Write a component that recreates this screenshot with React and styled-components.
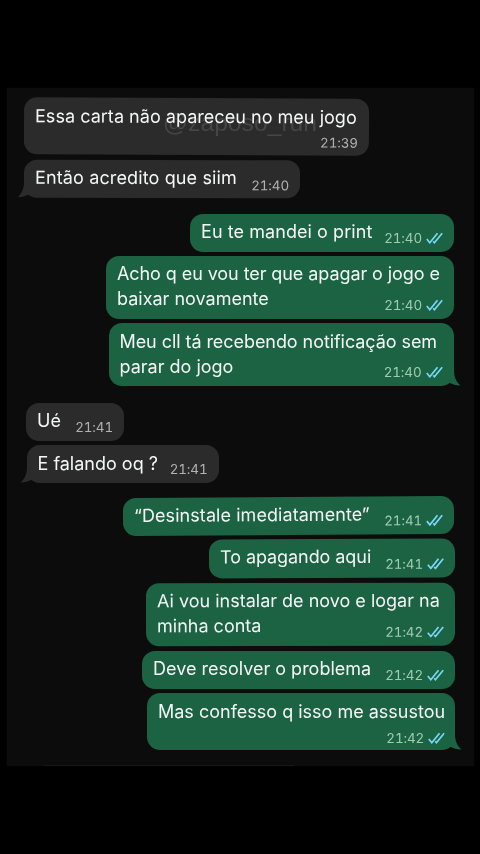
import React from "react";
import styled, { createGlobalStyle, css } from "styled-components";

const Global = createGlobalStyle`
  * { box-sizing: border-box; }
  html, body { margin: 0; background: #000; }
`;

const Screen = styled.main`
  width: 480px;
  height: 854px;
  padding: 88px 6px 0 7px;
  background: #000;
  font-family: Inter, "Liberation Sans", sans-serif;
  overflow: hidden;
`;

const Chat = styled.section`
  position: relative;
  display: flex;
  flex-direction: column;
  height: 678px;
  background: linear-gradient(#171717, #171717) 37px 100% / 250px 1px no-repeat #0c0c0c;
  box-shadow: 0 0 2px #070707;
`;

const Bubble = styled.article`
  position: relative;
  flex: none;
  display: grid;
  width: ${(p) => p.$w}px;
  height: ${(p) => p.$h}px;
  margin-top: ${(p) => p.$gap}px;
  padding: ${(p) => p.$top}px 11px ${(p) => p.$bottom}px 11px;
  border-radius: 13px;
  color: #f5f8f6;
  transform: rotate(${(p) => p.$tilt}deg);
  ${(p) =>
    p.$sent
      ? css`
          align-self: flex-end;
          margin-right: ${p.$edge}px;
          background: #1b6343;
        `
      : css`
          align-self: flex-start;
          margin-left: ${p.$edge}px;
          background: #2b2b2b;
        `}
`;

const Text = styled.p`
  grid-area: 1 / 1;
  place-self: start;
  margin: 0;
  font-size: 18px;
  line-height: 25px;
  white-space: nowrap;
`;

const Line = styled.span`
  display: block;
  width: max-content;
  letter-spacing: ${(p) => p.$track}px;
`;

const Meta = styled.footer`
  grid-area: 1 / 1;
  place-self: end;
  display: flex;
  align-items: center;
  gap: 4px;
  font-size: 13.4px;
  font-variant-numeric: tabular-nums;
  line-height: 18px;
  letter-spacing: -0.1px;
  color: ${(p) => (p.$sent ? "#a0cdb0" : "#b2b2b2")};
`;

const TickIcon = styled.svg`
  display: block;
  width: 17px;
  height: 12px;
  fill: none;
  stroke: #78d8f5;
  stroke-width: 1.7;
`;

const Tail = styled.svg`
  position: absolute;
  bottom: 0;
  width: 18px;
  height: 16px;
  ${(p) =>
    p.$sent
      ? css`
          right: -7px;
          fill: #1b6343;
        `
      : css`
          left: -7px;
          fill: #2b2b2b;
          transform: scaleX(-1);
        `}
`;

const Watermark = styled.span`
  position: absolute;
  left: 156px;
  top: 20.5px;
  font-family: "Liberation Sans", sans-serif;
  font-size: 24.7px;
  line-height: 28px;
  color: #464646;
  mix-blend-mode: lighten;
`;

const messages = [
  { lines: [["Essa carta não apareceu no meu jogo", 0.03]], time: "21:39", edge: 17, w: 345, h: 57, gap: 10, tilt: 0.25, bottom: 4 },
  { lines: [["Então acredito que siim", 0.13]], time: "21:40", edge: 17, w: 276, h: 38, gap: 5, tail: true, tilt: 0.1, top: 4.5 },
  { sent: true, lines: [["Eu te mandei o print", 0.065]], time: "21:40", edge: 20, w: 264, h: 38, gap: 15.5 },
  { sent: true, lines: [["Acho q eu vou ter que apagar o jogo e", -0.08], ["baixar novamente", 0]], time: "21:40", edge: 20, w: 348, h: 63, gap: 4.5, top: 4.5, bottom: 5 },
  { sent: true, lines: [["Meu cll tá recebendo notificação sem", -0.065], ["parar do jogo", 0]], time: "21:40", edge: 20.5, w: 345, h: 63, gap: 4, tail: true, bottom: 5 },
  { lines: [["Ué", 0]], time: "21:41", edge: 19, w: 98, h: 38, gap: 16.5 },
  { lines: [["E falando oq ?", 0]], time: "21:41", edge: 19.5, w: 192, h: 38, gap: 4.5, tail: true, bottom: 5 },
  { sent: true, lines: [["“Desinstale imediatamente”", 0.06]], time: "21:41", edge: 20, w: 331, h: 38, gap: 13.5, tilt: -0.35, top: 4.5, bottom: 5.5 },
  { sent: true, lines: [["To apagando aqui", -0.07]], time: "21:41", edge: 19.5, w: 246, h: 38.5, gap: 4.5, tilt: -0.2, top: 5, bottom: 5 },
  { sent: true, lines: [["Ai vou instalar de novo e logar na", 0], ["minha conta", 0]], time: "21:42", edge: 19, w: 309, h: 63, gap: 5, tilt: -0.1, top: 5, bottom: 5 },
  { sent: true, lines: [["Deve resolver o problema", 0]], time: "21:42", edge: 19, w: 313, h: 38, gap: 5 },
  { sent: true, lines: [["Mas confesso q isso me assustou", 0]], time: "21:42", edge: 19, w: 308, h: 57, gap: 4.5, tail: true, bottom: 3.5 },
];

function Ticks() {
  return (
    <TickIcon viewBox="0 0 17 12">
      <path d="M0.8 7 3.8 10.7 11.5 1.2M7.2 9.3 8.4 10.7 16.2 1.2" />
    </TickIcon>
  );
}

function Message({ m }) {
  return (
    <Bubble
      $sent={m.sent}
      $w={m.w}
      $h={m.h}
      $gap={m.gap}
      $edge={m.edge}
      $tilt={m.tilt ?? 0}
      $top={m.top ?? 5.5}
      $bottom={m.bottom ?? 4.5}
    >
      {m.tail && (
        <Tail $sent={m.sent} viewBox="0 0 18 16">
          <path d="M11 0C11 6 12.5 11 17.3 15.6C13.5 15.8 10 14.5 6 12.8L0 13V0Z" />
        </Tail>
      )}
      <Text>
        {m.lines.map(([text, track]) => (
          <Line key={text} $track={track}>
            {text}
          </Line>
        ))}
      </Text>
      <Meta $sent={m.sent}>
        <time>{m.time}</time>
        {m.sent && <Ticks />}
      </Meta>
    </Bubble>
  );
}

export default function App() {
  return (
    <>
      <Global />
      <Screen>
        <Chat>
          {messages.map((m) => (
            <Message key={m.lines[0][0]} m={m} />
          ))}
          <Watermark>@zaposo_run</Watermark>
        </Chat>
      </Screen>
    </>
  );
}
